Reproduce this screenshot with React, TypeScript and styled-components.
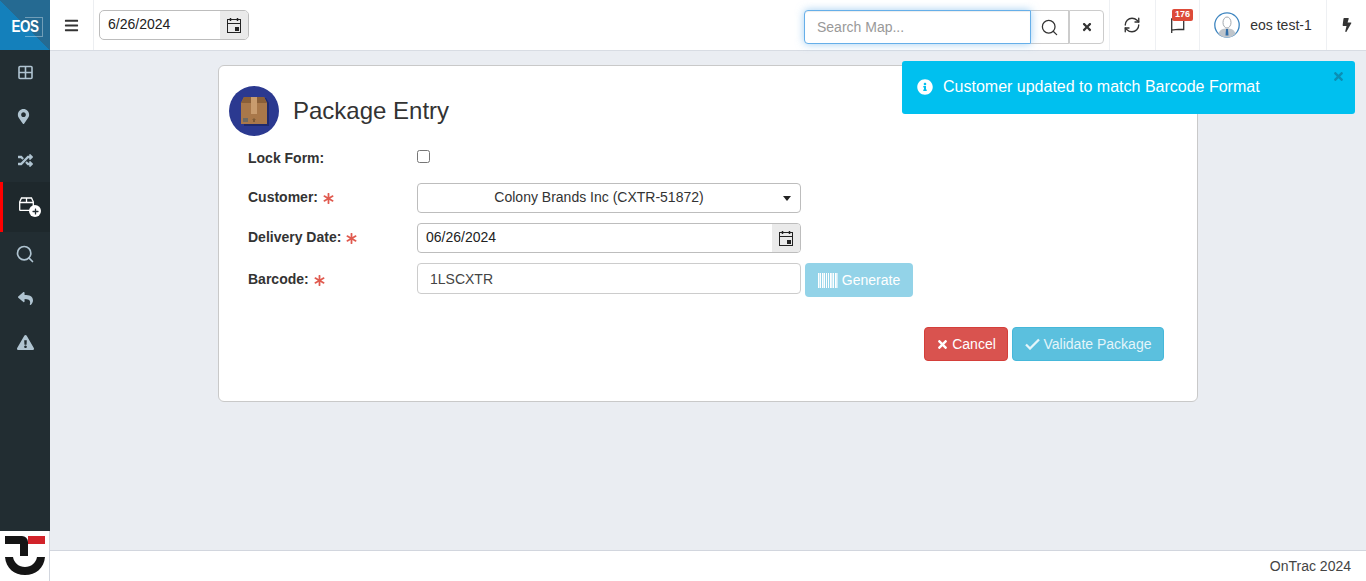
import React from "react";
import styled, { createGlobalStyle } from "styled-components";
import { FaBars, FaMapMarkerAlt, FaRandom, FaReply, FaExclamationTriangle, FaBolt, FaTimes, FaInfoCircle, FaPlus, FaAsterisk } from "react-icons/fa";
import { Search, RefreshCw } from "lucide-react";

const Global = createGlobalStyle`
  html, body { margin: 0; padding: 0; height: 100%; overflow: hidden; }
  body { font-family: "Liberation Sans", Arial, sans-serif; font-size: 14px; color: #333; background: #eaedf2; }
  * { box-sizing: border-box; }
`;

const Shell = styled.div`display: flex; width: 1366px; height: 581px; position: relative; overflow: hidden;`;

const Sidebar = styled.aside`width: 50px; flex: none; display: flex; flex-direction: column; background: #222d32; color: #b0c4d1;`;
const Brand = styled.div`
  height: 50px; flex: none; display: flex; align-items: center; justify-content: center; position: relative;
  background: linear-gradient(45deg, #1480bb 0 50%, #256a92 50% 100%);
  color: #fff; font: bold 16px "Liberation Sans", sans-serif; letter-spacing: -0.6px;
`;
const BrandFrame = styled.span`position: absolute; left: 25px; top: 17px; width: 18px; height: 20px; border: 1px solid rgba(255,255,255,.35); border-left: 0;`;
const BrandText = styled.span`position: relative; top: 2px; transform: scaleX(.84); display: block;`;
const Nav = styled.nav`flex: 1; display: flex; flex-direction: column;`;
const NavItem = styled.div<{ $active?: boolean; $shift?: number }>`
  height: ${p => (p.$active ? 50 : 44)}px; display: flex; align-items: center; justify-content: center; font-size: 15px;
  background: ${p => (p.$active ? "#1e282c" : "transparent")};
  border-left: ${p => (p.$active ? "3px solid #f00" : "0")};
  padding-right: ${p => (p.$active ? 3 : p.$shift ?? 0)}px;
  color: ${p => (p.$active ? "#fff" : "#b0c4d1")};
`;
const WarnItem = styled(NavItem)`font-size: 17px;`;
const LogoBox = styled.div`height: 50px; flex: none; background: #fff; border-right: 1px solid #d2d6de;`;
const ActiveIcon = styled.span`position: relative; display: block; width: 22px; height: 20px; padding-left: 5px;`;
const PlusBadge = styled.span`position: absolute; right: -5px; bottom: 0; width: 12px; height: 12px; border-radius: 50%; background: #fff; display: flex; align-items: center; justify-content: center; color: #222d32; font-size: 7px;`;

const Main = styled.div`flex: 1; min-width: 0; display: flex; flex-direction: column;`;
const Header = styled.header`height: 51px; flex: none; display: flex; align-items: stretch; background: #fff; border-bottom: 1px solid #d8dce3;`;
const HeaderCell = styled.div<{ $w: number; $line?: boolean }>`
  width: ${p => p.$w}px; flex: none; display: flex; align-items: center; justify-content: center;
  border-left: ${p => (p.$line ? "1px solid #eef0f3" : "0")};
  color: #333; position: relative;
`;
const MenuCell = styled(HeaderCell)`border-right: 1px solid #eceef1; font-size: 15px;`;
const DateWrap = styled.div`margin: 10px 0 0 5px; width: 150px; height: 30px; display: flex; border: 1px solid #bdbdbd; border-radius: 5px; overflow: hidden; background: #fff;`;
const DateText = styled.span`flex: 1; padding: 5px 0 0 8px; font-size: 14px; color: #222; line-height: 17px;`;
const CalAddon = styled.span`width: 28px; display: flex; align-items: center; justify-content: center; background: #eaeaea;`;
const Spacer = styled.div`flex: 1;`;
const SearchGroup = styled.div`margin: 10px 5px 0 0; height: 34px; display: flex; width: 300px;`;
const SearchInput = styled.div`
  width: 227px; height: 34px; border: 1px solid #66afe9; border-radius: 4px 0 0 4px; padding: 8px 12px; color: #999; font-size: 14px; line-height: 17px;
  box-shadow: inset 0 1px 1px rgba(0,0,0,.075), 0 0 8px rgba(102,175,233,.6); background: #fff; position: relative; z-index: 1;
`;
const SearchBtn = styled.div<{ $end?: boolean }>`
  width: ${p => (p.$end ? 35 : 38)}px; height: 34px; display: flex; align-items: center; justify-content: center;
  border: 1px solid #ccc; border-left: ${p => (p.$end ? "1px solid #ccc" : "0")}; border-radius: ${p => (p.$end ? "0 4px 4px 0" : "0")};
  color: #333; font-size: 12px; background: #fff;
`;
const CountBadge = styled.span`position: absolute; left: 16px; top: 9px; background: #dd4b39; color: #fff; font: bold 9px/9px "Liberation Sans", sans-serif; padding: 1px 3px 2px; border-radius: 2px; z-index: 1;`;
const SyncCell = styled(HeaderCell)`padding-right: 2px;`;
const UserName = styled.span`font-size: 14px; color: #333; margin-left: 10px;`;

const Content = styled.main`flex: 1; min-height: 0; padding: 14px 0 0 168px;`;
const Card = styled.section`width: 980px; height: 337px; background: #fff; border: 1px solid #c9c9c9; border-radius: 6px; padding: 20px 33px 0 10px;`;
const TitleRow = styled.div`display: flex; align-items: center; height: 50px;`;
const Title = styled.h1`margin: 0 0 0 14px; font-size: 24px; font-weight: 400; color: #333; line-height: 50px;`;
const Form = styled.div`padding-left: 19px; margin-top: 12px;`;
const Row = styled.div<{ $h: number; $gap: number }>`display: flex; align-items: flex-start; height: ${p => p.$h}px; margin-bottom: ${p => p.$gap}px;`;
const Label = styled.label<{ $top?: number }>`width: 169px; flex: none; font-size: 14px; font-weight: 700; color: #333; line-height: 30px; display: flex; align-items: center; gap: 5px; margin-top: ${p => p.$top ?? 0}px;`;
const Star = styled.span`color: #e05a4f; font-size: 11px; display: flex; position: relative; top: 1px;`;
const CheckBox = styled.span`display: block; width: 13px; height: 13px; margin-top: 2px; border: 1px solid #767676; border-radius: 2.5px; background: #fff;`;
const SelectBox = styled.div`width: 384px; height: 30px; border: 1px solid #bdbdbd; border-radius: 4px; display: flex; align-items: center; position: relative; justify-content: center; padding: 0 20px 2px 0; color: #333; font-size: 14px;`;
const Caret = styled.span`position: absolute; right: 9px; top: 12px; border: 4px solid transparent; border-top: 5px solid #222; border-bottom: 0;`;
const DateField = styled.div`width: 384px; height: 30px; border: 1px solid #bdbdbd; border-radius: 4px; display: flex; overflow: hidden;`;
const BarcodeField = styled.div`width: 384px; height: 31px; border: 1px solid #ccc; border-radius: 4px; padding: 7px 12px; font-size: 14px; line-height: 17px; color: #444;`;
const GenerateBtn = styled.div`margin-left: 4px; width: 108px; height: 34px; background: #93d3e8; border-radius: 4px; color: #fff; font-size: 14px; display: flex; align-items: center; justify-content: center; gap: 4px;`;
const Actions = styled.div`display: flex; justify-content: flex-end; gap: 4px; margin-top: 30px;`;
const ActionBtn = styled.div<{ $bg: string; $line: string; $w: number }>`
  width: ${p => p.$w}px; height: 34px; background: ${p => p.$bg}; border: 1px solid ${p => p.$line}; border-radius: 4px; color: #fff; font-size: 14px;
  display: flex; align-items: center; justify-content: center; gap: 3px;
`;
const FadedBtn = styled(ActionBtn)`color: #e4f5fa; gap: 4px;`;

const Footer = styled.footer`height: 31px; flex: none; background: #fff; border-top: 1px solid #d2d6de; display: flex; align-items: center; justify-content: flex-end; padding-right: 15px; font-size: 14px; color: #444;`;

const Toast = styled.div`
  position: absolute; left: 902px; top: 61px; width: 453px; height: 53px; background: #00c0ef; border-radius: 3px; color: #fff;
  display: flex; align-items: center; padding: 0 0 2px 15px; font-size: 16px; z-index: 5; gap: 10px;
`;
const ToastClose = styled.span`position: absolute; right: 10px; top: 9px; color: #0a8fb5; font-size: 13px; display: flex;`;

const GridIcon = () => (
  <svg width="15" height="15" viewBox="0 0 15 15" fill="none" stroke="currentColor" strokeWidth="1.6"><rect x="1" y="1.5" width="13" height="12" rx="1" /><path d="M7.5 1.500v12M1 7.500h13" /></svg>
);
const CalIcon = () => (
  <svg width="16" height="17" viewBox="0 0 16 17" fill="none" stroke="#222"><rect x="1.5" y="2.5" width="13" height="13" /><path d="M1.5 6.500h13" /><path d="M4.500 1v3M11.500 1v3" strokeWidth="1.500" /><rect x="9" y="10" width="4" height="4" fill="#222" stroke="none" /></svg>
);
const BoxPlusIcon = () => (
  <svg width="15" height="14" viewBox="0 0 15 14" fill="none" stroke="#fff" strokeWidth="1.300"><path d="M2.500 1h10l1.800 4v7.500a1 1 0 0 1-1 1H1.700a1 1 0 0 1-1-1V5z" /><path d="M.7 5.500h13.600M7.500 1v4.500" /></svg>
);
const FlagIcon = () => (
  <svg width="15" height="16" viewBox="0 0 15 16" fill="none" stroke="#333" strokeWidth="1.300"><path d="M1.700 16V2h12v10.500H8.500c-2.500 0-3.500.5-6.800.5" /></svg>
);
const CheckIcon = () => (
  <svg width="15" height="12" viewBox="0 0 15 12" fill="none" stroke="currentColor" strokeWidth="2.300"><path d="M1 6.500l4 4 9-9" /></svg>
);
const PackageIcon = () => (
  <svg width="50" height="50" viewBox="0 0 50 50">
    <circle cx="25" cy="25" r="25" fill="#2b3990" />
    <path d="M15 12 H37 L40 17 V40 H15 Z" fill="#1f2a6c" />
    <path d="M12 17 L15 11 H35 L38 17 V38 H12 Z" fill="#a9784a" />
    <path d="M12 17 L15 11 H35 L38 17 Z" fill="#8a5f38" />
    <rect x="22" y="11" width="6" height="17" fill="#c99c6e" />
    <rect x="14" y="32" width="5" height="4" fill="#6f6a63" />
    <path d="M25 32l2 2h-1v2h-2v-2h-1z" fill="#7d5a37" />
  </svg>
);
const Avatar = () => (
  <svg width="26" height="26" viewBox="0 0 26 26">
    <circle cx="13" cy="13" r="12.200" fill="#fff" stroke="#3f86c0" strokeWidth="1.300" />
    <path d="M4.500 22c1-4.500 4.500-5.500 8.500-5.500s7.500 1 8.500 5.500a12 12 0 0 1-17 0z" fill="#bfc5cb" />
    <path d="M12 17h2l.5 6.500h-3z" fill="#2f6da8" />
    <ellipse cx="13" cy="10.500" rx="4" ry="5.500" fill="#fff" stroke="#8a9299" strokeWidth=".8" />
  </svg>
);
const OnTracLogo = () => (
  <svg width="49" height="50" viewBox="0 0 49 50">
    <path d="M5 5h17a6 6 0 0 1 6 6v14h-8V13H5z" fill="#151515" />
    <rect x="28" y="5" width="17" height="8" fill="#d2232a" />
    <path d="M5 26h8c1 6 6 10 12 10s11-4 12-10h8c-1 11-9 18-20 18S6 37 5 26z" fill="#151515" />
  </svg>
);
const Barcode = () => (
  <svg width="20" height="15" viewBox="0 0 20 15" fill="#fff">
    {[0, 2, 4, 5.5, 8, 10, 12, 13.5, 15, 17, 18.5].map((x, i) => (
      <rect key={i} x={x} y="0" width={i % 3 === 0 ? 1.5 : 1} height="15" />
    ))}
  </svg>
);
const Req = () => <Star><FaAsterisk /></Star>;

export default function App() {
  return (
    <Shell>
      <Global />
      <Sidebar>
        <Brand><BrandFrame /><BrandText>EOS</BrandText></Brand>
        <Nav>
          <NavItem><GridIcon /></NavItem>
          <NavItem $shift={3}><FaMapMarkerAlt /></NavItem>
          <NavItem><FaRandom /></NavItem>
          <NavItem $active><ActiveIcon><BoxPlusIcon /><PlusBadge><FaPlus /></PlusBadge></ActiveIcon></NavItem>
          <NavItem><Search size={20} strokeWidth={2} /></NavItem>
          <NavItem><FaReply /></NavItem>
          <WarnItem><FaExclamationTriangle /></WarnItem>
        </Nav>
        <LogoBox><OnTracLogo /></LogoBox>
      </Sidebar>
      <Main>
        <Header>
          <MenuCell $w={44}><FaBars /></MenuCell>
          <DateWrap><DateText>6/26/2024</DateText><CalAddon><CalIcon /></CalAddon></DateWrap>
          <Spacer />
          <SearchGroup>
            <SearchInput>Search Map...</SearchInput>
            <SearchBtn><Search size={19} strokeWidth={1.6} /></SearchBtn>
            <SearchBtn $end><FaTimes /></SearchBtn>
          </SearchGroup>
          <SyncCell $w={46} $line><RefreshCw size={18} strokeWidth={1.8} /></SyncCell>
          <HeaderCell $w={44} $line><CountBadge>176</CountBadge><FlagIcon /></HeaderCell>
          <HeaderCell $w={127} $line><Avatar /><UserName>eos test-1</UserName></HeaderCell>
          <HeaderCell $w={40} $line><FaBolt size={14} /></HeaderCell>
        </Header>
        <Content>
          <Card>
            <TitleRow><PackageIcon /><Title>Package Entry</Title></TitleRow>
            <Form>
              <Row $h={25} $gap={10}>
                <Label $top={-5}>Lock Form:</Label>
                <CheckBox />
              </Row>
              <Row $h={30} $gap={10}>
                <Label $top={-1}>Customer:<Req /></Label>
                <SelectBox>Colony Brands Inc (CXTR-51872)<Caret /></SelectBox>
              </Row>
              <Row $h={30} $gap={10}>
                <Label $top={-1}>Delivery Date:<Req /></Label>
                <DateField><DateText>06/26/2024</DateText><CalAddon><CalIcon /></CalAddon></DateField>
              </Row>
              <Row $h={34} $gap={0}>
                <Label $top={1}>Barcode:<Req /></Label>
                <BarcodeField>1LSCXTR</BarcodeField>
                <GenerateBtn><Barcode />Generate</GenerateBtn>
              </Row>
              <Actions>
                <ActionBtn $bg="#d9534f" $line="#d43f3a" $w={84}><FaTimes size={13} />Cancel</ActionBtn>
                <FadedBtn $bg="#5bc0de" $line="#46b8da" $w={152}><CheckIcon />Validate Package</FadedBtn>
              </Actions>
            </Form>
          </Card>
        </Content>
        <Footer>OnTrac 2024</Footer>
      </Main>
      <Toast>
        <FaInfoCircle size={16} />
        <span>Customer updated to match Barcode Format</span>
        <ToastClose><FaTimes /></ToastClose>
      </Toast>
    </Shell>
  );
}
